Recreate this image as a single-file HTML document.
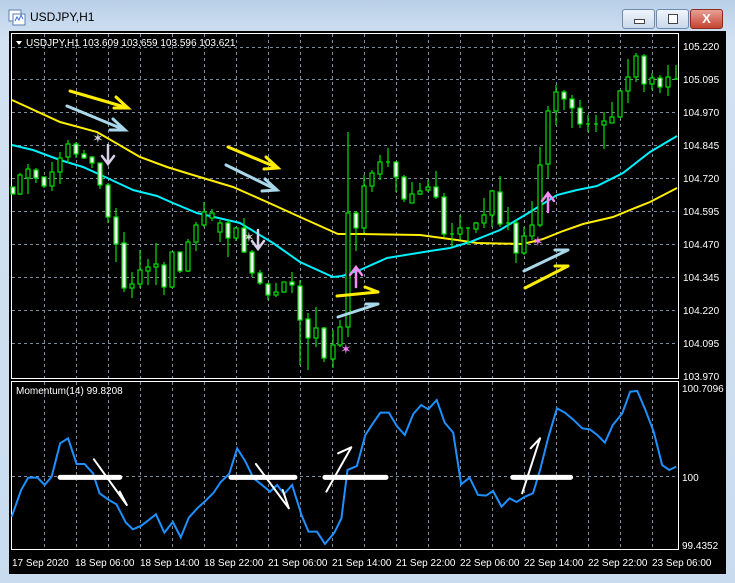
<!DOCTYPE html>
<html><head><meta charset="utf-8"><style>
html,body{margin:0;padding:0;width:735px;height:583px;overflow:hidden;background:#c4d8ee;font-family:"Liberation Sans",sans-serif}
.win{position:absolute;left:0;top:0;width:735px;height:583px;background:linear-gradient(#b9cfe8,#d3e2f2 40px,#c9dcef);}
.title{position:absolute;left:30px;top:10px;font-size:12px;color:#000}
.btn{position:absolute;top:9px;height:18px;border:1px solid #6e8bb0;border-radius:3px;background:linear-gradient(#f0f5fb,#c9d8ea)}
svg{position:absolute;left:0;top:0}
</style></head><body>
<div class="win"></div>
<svg width="20" height="20" style="left:8px;top:8px" viewBox="0 0 20 20"><rect x="1" y="2" width="12" height="11" fill="#fff" stroke="#5a7fb0"/><rect x="5" y="6" width="12" height="11" fill="#fff" stroke="#5a7fb0"/><path d="M7 13 l2 -4 l2 3 l2 -5 l2 4" stroke="#3b6fd0" fill="none"/></svg>
<div class="title">USDJPY,H1</div>
<div class="btn" style="left:622px;width:31px"><div style="position:absolute;left:11px;top:9px;width:9px;height:3px;background:#fff;border:1px solid #444"></div></div>
<div class="btn" style="left:656px;width:31px"><div style="position:absolute;left:11px;top:4px;width:8px;height:8px;border:1px solid #444;background:#fff"></div></div>
<div class="btn" style="left:690px;width:31px;background:linear-gradient(#e8a195,#c5432f);border-color:#8a2b1e;color:#fff;font-weight:bold;font-size:13px;text-align:center;line-height:18px">X</div>
<svg width="735" height="583" viewBox="0 0 735 583">
<rect x="9" y="31" width="717" height="543" fill="#000"/>
<rect x="11.5" y="33.5" width="667" height="345" fill="none" stroke="#fff"/>
<rect x="11.5" y="381.5" width="667" height="168" fill="none" stroke="#fff"/>
<g stroke="#7d8ea3" stroke-dasharray="3,3" stroke-width="1">
<path d="M12 47.5H678M12 79.5H678M12 112.5H678M12 145.5H678M12 178.5H678M12 211.5H678M12 244.5H678M12 277.5H678M12 310.5H678M12 343.5H678M12 476.5H678"/>
<path d="M44.5 34V378M76.5 34V378M108.5 34V378M140.5 34V378M172.5 34V378M204.5 34V378M236.5 34V378M268.5 34V378M300.5 34V378M332.5 34V378M364.5 34V378M396.5 34V378M428.5 34V378M460.5 34V378M492.5 34V378M524.5 34V378M556.5 34V378M588.5 34V378M620.5 34V378M652.5 34V378"/>
<path d="M44.5 382V549M76.5 382V549M108.5 382V549M140.5 382V549M172.5 382V549M204.5 382V549M236.5 382V549M268.5 382V549M300.5 382V549M332.5 382V549M364.5 382V549M396.5 382V549M428.5 382V549M460.5 382V549M492.5 382V549M524.5 382V549M556.5 382V549M588.5 382V549M620.5 382V549M652.5 382V549"/>
</g>
<g fill="#fff" font-size="10" font-family="Liberation Sans,sans-serif">
<path d="M16 41h6l-3 4z" fill="#fff"/>
<text x="26" y="46">USDJPY,H1  103.609 103.659 103.596 103.621</text>
<text x="683" y="50">105.220</text><text x="683" y="83">105.095</text><text x="683" y="116">104.970</text><text x="683" y="149">104.845</text><text x="683" y="182">104.720</text><text x="683" y="215">104.595</text><text x="683" y="248">104.470</text><text x="683" y="281">104.345</text><text x="683" y="314">104.220</text><text x="683" y="347">104.095</text><text x="683" y="380">103.970</text>
<text x="682" y="392">100.7096</text><text x="682" y="481">100</text><text x="682" y="549">99.4352</text>
<text x="16" y="394">Momentum(14) 99.8208</text>
<g font-size="10"><text x="12" y="566">17 Sep 2020</text><text x="75" y="566">18 Sep 06:00</text><text x="140" y="566">18 Sep 14:00</text><text x="204" y="566">18 Sep 22:00</text><text x="268" y="566">21 Sep 06:00</text><text x="332" y="566">21 Sep 14:00</text><text x="396" y="566">21 Sep 22:00</text><text x="460" y="566">22 Sep 06:00</text><text x="524" y="566">22 Sep 14:00</text><text x="588" y="566">22 Sep 22:00</text><text x="652" y="566">23 Sep 06:00</text></g>
</g>
<!-- MAs -->
<polyline fill="none" stroke="#ffee00" stroke-width="2" points="12,100 60,122 97,132 140,157 167,167 193,175 233,187 267,202 300,217 338,234 360,234 420,235 457,240 477,243 523,244 543,239 563,231 583,224 613,217 630,210 650,202 677,188"/>
<polyline fill="none" stroke="#00f0ff" stroke-width="2" points="12,145 33,150 60,160 83,167 103,176 133,190 157,196 173,203 197,213 240,223 273,243 300,262 333,277 342,276 360,270 387,258 430,251 450,248 470,242 500,230 530,212 557,195 577,190 597,186 623,173 650,152 677,136"/>
<!-- candles -->
<g stroke="#00e000" stroke-width="1" id="c"></g>
<g stroke="#00e000" stroke-width="1.2">
<path d="M13 187V194M20 173V195M28 164V194M36 168V183M44 177V188M52 162V191M60 152V184M68 140V163M76 142V158M84 150V159M92 156V168M100 163V189M108 183V223M116 208V262M124 232V292M132 272V298M140 250V288M148 259V285M156 243V285M164 262V295M172 252V288M180 252V273M188 239V272M196 222V251M204 202V227M212 209V221M220 220V242M228 220V257M236 227V241M244 218V253M252 250V277M260 270V285M268 283V300M276 283V297M284 282V293M292 272V293M300 280V365M308 313V370M316 307V347M324 327V362M333 330V368M340 320V347M348 132V337M356 211V251M364 175V233M372 170V192M380 155V180M388 148V167M396 161V192M404 175V202M412 182V203M420 183V195M428 180V192M436 171V199M444 193V237M452 223V247M460 215V240M468 227V245M476 222V233M484 198V228M492 190V227M500 176V227M508 207V230M516 220V263M524 227V255M532 201V240M540 147V227M548 106V178M556 85V125M564 90V110M572 95V128M580 100V128M588 115V132M596 115V132M604 112V149M612 102V123M620 90V118M628 59V103M636 53V82M644 54V92M652 73V90M660 75V93M668 65V96M676 65V80"/>
</g>
<g stroke="#00e000" stroke-width="1.2">
<g fill="#fff">
<rect x="11" y="187" width="4" height="7"/><rect x="34" y="170" width="4" height="8"/><rect x="42" y="177" width="4" height="9"/><rect x="74" y="144" width="4" height="10"/><rect x="82" y="154" width="4" height="4"/><rect x="90" y="157" width="4" height="6"/><rect x="98" y="163" width="4" height="22"/><rect x="106" y="185" width="4" height="32"/><rect x="114" y="217" width="4" height="27"/><rect x="122" y="243" width="4" height="45"/><rect x="162" y="265" width="4" height="22"/><rect x="178" y="252" width="4" height="19"/><rect x="226" y="223" width="4" height="15"/><rect x="242" y="228" width="4" height="24"/><rect x="250" y="252" width="4" height="21"/><rect x="258" y="273" width="4" height="10"/><rect x="266" y="284" width="4" height="11"/><rect x="290" y="282" width="4" height="3"/><rect x="298" y="286" width="4" height="34"/><rect x="306" y="319" width="4" height="19"/><rect x="322" y="328" width="4" height="30"/><rect x="354" y="213" width="4" height="15"/><rect x="394" y="162" width="4" height="15"/><rect x="402" y="177" width="4" height="22"/><rect x="434" y="187" width="4" height="10"/><rect x="442" y="197" width="4" height="37"/><rect x="498" y="192" width="4" height="32"/><rect x="514" y="223" width="4" height="30"/><rect x="562" y="92" width="4" height="7"/><rect x="570" y="99" width="4" height="9"/><rect x="578" y="108" width="4" height="16"/><rect x="642" y="56" width="4" height="28"/><rect x="658" y="78" width="4" height="9"/>
</g>
<g fill="#000">
<rect x="18" y="175" width="4" height="19"/><rect x="26" y="169" width="4" height="9"/><rect x="50" y="172" width="4" height="14"/><rect x="58" y="158" width="4" height="14"/><rect x="66" y="144" width="4" height="13"/><rect x="130" y="284" width="4" height="4"/><rect x="138" y="270" width="4" height="14"/><rect x="146" y="267" width="4" height="4"/><rect x="154" y="264" width="4" height="3"/><rect x="170" y="252" width="4" height="35"/><rect x="186" y="242" width="4" height="29"/><rect x="194" y="225" width="4" height="17"/><rect x="202" y="212" width="4" height="13"/><rect x="210" y="213" width="4" height="5"/><rect x="218" y="223" width="4" height="9"/><rect x="234" y="228" width="4" height="10"/><rect x="274" y="292" width="4" height="3"/><rect x="282" y="282" width="4" height="10"/><rect x="314" y="328" width="4" height="10"/><rect x="331" y="345" width="4" height="14"/><rect x="338" y="327" width="4" height="18"/><rect x="346" y="213" width="4" height="114"/><rect x="362" y="186" width="4" height="42"/><rect x="370" y="173" width="4" height="13"/><rect x="378" y="162" width="4" height="12"/><rect x="410" y="194" width="4" height="9"/><rect x="418" y="191" width="4" height="3"/><rect x="426" y="187" width="4" height="3"/><rect x="458" y="228" width="4" height="6"/><rect x="474" y="223" width="4" height="6"/><rect x="482" y="215" width="4" height="8"/><rect x="490" y="191" width="4" height="24"/><rect x="522" y="236" width="4" height="17"/><rect x="530" y="225" width="4" height="11"/><rect x="538" y="165" width="4" height="60"/><rect x="546" y="111" width="4" height="53"/><rect x="554" y="92" width="4" height="19"/><rect x="602" y="121" width="4" height="4"/><rect x="610" y="117" width="4" height="6"/><rect x="618" y="91" width="4" height="26"/><rect x="626" y="77" width="4" height="14"/><rect x="634" y="56" width="4" height="21"/><rect x="650" y="78" width="4" height="6"/><rect x="666" y="77" width="4" height="10"/>
</g>
<path d="M386 162H390M450 234H454M466 228H470M506 223H510M586 124H590M594 124H598M674 79H678"/>
</g>
<!-- annotations -->
<g fill="none" stroke-width="3" stroke-linecap="round">
<path d="M70 91L128 108M116 97L128 108L114 108" stroke="#ffee00"/>
<path d="M67 106L125 130M113 119L125 130L110 130" stroke="#a8d8ea"/>
<path d="M228 147L278 168M266 157L278 168L264 169" stroke="#ffee00"/>
<path d="M226 165L277 190M265 179L277 190L262 191" stroke="#a8d8ea"/>
<path d="M337 296L378 292M365 287L378 292" stroke="#ffee00"/>
<path d="M338 317L378 304M366 304L378 304" stroke="#a8d8ea"/>
<path d="M525 288L568 266M555 266L568 266" stroke="#ffee00"/>
<path d="M524 271L568 250M555 250L568 250" stroke="#a8d8ea"/>
</g>
<g fill="none" stroke-width="2.5" stroke-linecap="round">
<path d="M356 287V268M350 275L356 267L362 275" stroke="#f08cf0"/>
<path d="M548 212V194M542 201L548 193L554 201" stroke="#f08cf0"/>
<path d="M108 145V163M102 156L108 164L114 156" stroke="#d8d0e8"/>
<path d="M258 230V248M252 241L258 249L264 241" stroke="#d8d0e8"/>
</g>
<g font-size="14" font-family="DejaVu Sans,sans-serif">
<text x="340" y="354" fill="#f080f0">✶</text><text x="532" y="246" fill="#f080f0">✶</text>
<text x="92" y="143" fill="#d0d0d0">✶</text><text x="243" y="242" fill="#d0d0d0">✶</text>
</g>
<!-- momentum -->
<g transform="translate(0,370) scale(0.4696,0.3333)">
<polyline fill="none" stroke="#1e90ff" stroke-width="2" vector-effect="non-scaling-stroke" points="25,440 45,360 60,323 80,323 95,345 110,320 128,220 145,205 163,282 180,282 198,310 212,370 232,390 248,403 268,458 283,478 300,468 315,452 332,433 350,488 368,456 385,502 402,443 420,415 438,392 455,368 470,336 488,312 505,235 522,273 540,325 558,345 575,365 590,345 605,372 622,345 642,435 657,485 675,485 692,522 712,488 727,445 740,300 760,288 778,195 795,158 810,128 828,128 845,168 862,195 880,132 897,105 912,118 930,90 947,158 965,188 982,343 1000,323 1018,375 1035,377 1050,363 1068,410 1085,385 1100,396 1118,380 1135,370 1150,300 1168,200 1186,115 1203,128 1220,148 1240,175 1256,178 1272,195 1288,218 1305,165 1325,130 1342,65 1357,63 1373,115 1392,185 1410,285 1425,300 1440,290"/>
<g stroke="#fff" fill="none" stroke-linecap="round" vector-effect="non-scaling-stroke">
<path d="M128 322H255M492 322H628M692 322H822M1092 322H1215" stroke-width="5" vector-effect="non-scaling-stroke"/>
<path d="M200 268L270 405M255 365L270 405M545 282L615 415M602 360L615 415M695 365L748 232M720 250L748 232M1112 370L1150 205M1130 235L1150 205" stroke-width="2" vector-effect="non-scaling-stroke"/>
</g>
</g>
</svg>
</body></html>
